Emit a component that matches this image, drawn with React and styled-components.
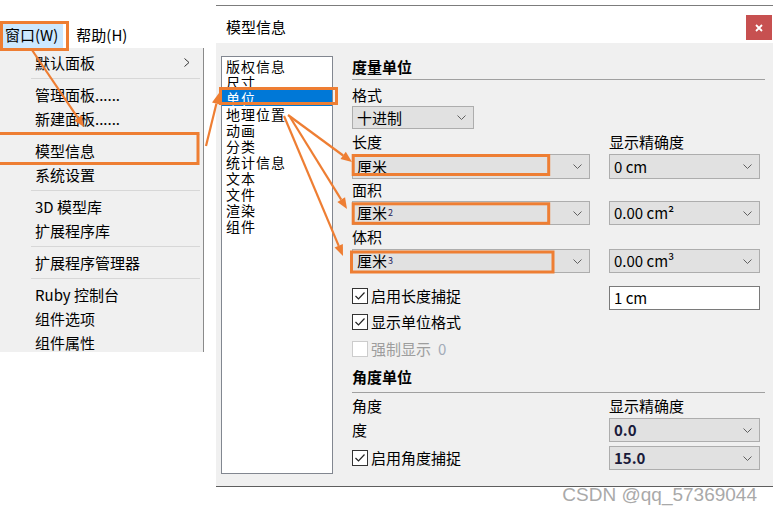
import React from "react";
import styled, { createGlobalStyle } from "styled-components";

const ORANGE = "#ee7e33";

const GlobalStyle = createGlobalStyle`
  html, body {
    margin: 0;
    padding: 0;
    background: #fff;
  }
  body {
    font-family: "Noto Sans CJK SC", "Noto Sans", sans-serif;
    color: #000;
  }
`;

const menuGroups = [
  [{ label: "默认面板", sub: true }],
  [{ label: "管理面板......" }, { label: "新建面板......" }],
  [{ label: "模型信息" }, { label: "系统设置" }],
  [{ label: "3D 模型库" }, { label: "扩展程序库" }],
  [{ label: "扩展程序管理器" }],
  [{ label: "Ruby 控制台" }, { label: "组件选项" }, { label: "组件属性" }],
];

const navItems = ["版权信息", "尺寸", "单位", "地理位置", "动画", "分类", "统计信息", "文本", "文件", "渲染", "组件"];

function Chevron() {
  return (
    <svg width="9" height="5" viewBox="0 0 9 5">
      <polyline points="0.5,0.5 4.5,4.5 8.5,0.5" fill="none" stroke="#606060" strokeWidth="1" />
    </svg>
  );
}

function Check({ checked, disabled, children }) {
  return (
    <CheckRow $disabled={disabled}>
      <Box $disabled={disabled}>
        {checked && (
          <svg width="12" height="10" viewBox="0 0 12 10">
            <polyline points="1.5,5 4.5,8 10.5,1.5" fill="none" stroke="#222" strokeWidth="1.2" />
          </svg>
        )}
      </Box>
      {children}
    </CheckRow>
  );
}

function Arrow({ x1, y1, x2, y2 }) {
  const a = Math.atan2(y2 - y1, x2 - x1);
  const len = 11;
  const half = 4.5;
  const bx = x2 - len * Math.cos(a);
  const by = y2 - len * Math.sin(a);
  const p1 = `${bx + half * Math.sin(a)},${by - half * Math.cos(a)}`;
  const p2 = `${bx - half * Math.sin(a)},${by + half * Math.cos(a)}`;
  return (
    <g>
      <line x1={x1} y1={y1} x2={bx} y2={by} stroke={ORANGE} strokeWidth="2.2" />
      <polygon points={`${x2},${y2} ${p1} ${p2}`} fill={ORANGE} />
    </g>
  );
}

export default function App() {
  return (
    <Page>
      <GlobalStyle />
      <MenuColumn>
        <MenuBar>
          <MenuTitle $active>窗口(W)</MenuTitle>
          <MenuTitle>帮助(H)</MenuTitle>
        </MenuBar>
        <Dropdown>
          {menuGroups.map((group, gi) => (
            <React.Fragment key={gi}>
              {gi > 0 && <MenuSeparator />}
              {group.map((item) => (
                <MenuItem key={item.label}>
                  {item.label}
                  {item.sub && (
                    <SubArrow width="6" height="9" viewBox="0 0 6 9">
                      <polyline points="0.5,0.5 5,4.5 0.5,8.5" fill="none" stroke="#333" strokeWidth="1" />
                    </SubArrow>
                  )}
                </MenuItem>
              ))}
            </React.Fragment>
          ))}
        </Dropdown>
      </MenuColumn>

      <DialogColumn>
        <Dialog>
          <TitleBar>
            <TitleText>模型信息</TitleText>
            <CloseButton>
              <svg width="8" height="8" viewBox="0 0 8 8">
                <path d="M1 1 L7 7 M7 1 L1 7" stroke="#fff" strokeWidth="1.8" />
              </svg>
            </CloseButton>
          </TitleBar>
          <DialogBody>
            <NavList>
              {navItems.map((n) => (
                <NavItem key={n} $selected={n === "单位"}>{n}</NavItem>
              ))}
            </NavList>

            <Panel>
              <SectionHead $h={24} $mb={4}>度量单位</SectionHead>
              <Row $h={22}><span>格式</span></Row>
              <Row $h={23}>
                <Select $w={122}>十进制<Chevron /></Select>
              </Row>
              <Row $h={25}><span>长度</span><span>显示精确度</span></Row>
              <Row $h={25}>
                <Select>厘米<Chevron /></Select>
                <Select>0 cm<Chevron /></Select>
              </Row>
              <Row $h={22}><span>面积</span></Row>
              <Row $h={24}>
                <Select><span>厘米<Sup>2</Sup></span><Chevron /></Select>
                <Select>0.00 cm²<Chevron /></Select>
              </Row>
              <Row $h={24}><span>体积</span></Row>
              <Row $h={24}>
                <Select><span>厘米<Sup>3</Sup></span><Chevron /></Select>
                <Select>0.00 cm³<Chevron /></Select>
              </Row>

              <Row $h={28} $mt={9}>
                <Check checked>启用长度捕捉</Check>
                <TextInput>1 cm</TextInput>
              </Row>
              <Row $h={24}>
                <Check checked>显示单位格式</Check>
              </Row>
              <Row $h={30}>
                <Check disabled>强制显示 <Zero>0</Zero></Check>
              </Row>

              <SectionHead $h={29} $pb={3}>角度单位</SectionHead>
              <Row $h={25}><span>角度</span><span>显示精确度</span></Row>
              <Row $h={24}>
                <span>度</span>
                <Select $bold>0.0<Chevron /></Select>
              </Row>
              <Row $h={24} $mt={4}>
                <Check checked>启用角度捕捉</Check>
                <Select $bold>15.0<Chevron /></Select>
              </Row>
            </Panel>
          </DialogBody>
        </Dialog>
        <Watermark>CSDN @qq_57369044</Watermark>
      </DialogColumn>

      <Annotations width="773" height="515" viewBox="0 0 773 515">
        <g fill="none" stroke={ORANGE} strokeWidth="3">
          <rect x="1.5" y="22.5" width="66" height="27" />
          <rect x="-2" y="133.5" width="200" height="30" />
          <rect x="220.5" y="88.5" width="116" height="15" />
          <rect x="353.2" y="155.5" width="195.5" height="19" />
          <rect x="353.2" y="203.8" width="195.5" height="19.5" />
          <rect x="351.5" y="252" width="201.5" height="20" />
        </g>
        <Arrow x1={32} y1={50} x2={84} y2={127} />
        <Arrow x1={206} y1={146} x2={219} y2={93} />
        <Arrow x1={288} y1={115} x2={352} y2={162} />
        <Arrow x1={290} y1={117} x2={347} y2={209} />
        <Arrow x1={284} y1={116} x2={343} y2={256} />
      </Annotations>
    </Page>
  );
}

const Page = styled.div`
  position: relative;
  width: 773px;
  height: 515px;
  overflow: hidden;
  display: flex;
  align-items: flex-start;
  background: #fff;
`;

const MenuColumn = styled.div`
  width: 204px;
  flex-shrink: 0;
  padding-top: 22px;
`;

const MenuBar = styled.div`
  display: flex;
  gap: 8px;
  height: 26px;
`;

const MenuTitle = styled.div`
  padding: 0 5px;
  height: 26px;
  line-height: 26px;
  font-size: 15px;
  background: ${(p) => (p.$active ? "#cce8ff" : "transparent")};
`;

const Dropdown = styled.div`
  height: 304px;
  overflow: hidden;
  box-sizing: border-box;
  padding-top: 2px;
  background: #f0f0f0;
  border-right: 1px solid #8a8a8a;
`;

const MenuItem = styled.div`
  display: flex;
  align-items: center;
  height: 24px;
  padding: 0 13px 0 35px;
  font-size: 15px;
  white-space: nowrap;
`;

const SubArrow = styled.svg`
  margin-left: auto;
`;

const MenuSeparator = styled.div`
  height: 1px;
  background: #d7d7d7;
  margin: 4px 3px 3px 31px;
`;

const DialogColumn = styled.div`
  flex: 1;
  margin-left: 12px;
  padding-top: 5px;
  display: flex;
  flex-direction: column;
`;

const Dialog = styled.div`
  border-top: 1px solid #7c7c7c;
  border-bottom: 1px solid #5e5e5e;
  background: #f0f0f0;
`;

const TitleBar = styled.div`
  height: 37px;
  background: #fff;
  display: flex;
  justify-content: space-between;
  align-items: flex-start;
`;

const TitleText = styled.div`
  padding: 11px 0 0 10px;
  line-height: 20px;
  font-size: 15px;
`;

const CloseButton = styled.div`
  margin: 9px 1px 0 0;
  width: 26px;
  height: 25px;
  background: #c75050;
  display: flex;
  align-items: center;
  justify-content: center;
`;

const DialogBody = styled.div`
  height: 443px;
  box-sizing: border-box;
  display: flex;
  padding: 13px 8px 0 5px;
`;

const NavList = styled.div`
  width: 112px;
  height: 418px;
  flex-shrink: 0;
  box-sizing: border-box;
  border: 1px solid #828790;
  background: #fff;
  padding: 1px 0;
`;

const NavItem = styled.div`
  height: 16px;
  line-height: 16px;
  font-size: 14px;
  letter-spacing: 1px;
  padding-left: 4px;
  background: ${(p) => (p.$selected ? "#0078d7" : "transparent")};
  color: ${(p) => (p.$selected ? "#fff" : "#000")};
`;

const Panel = styled.div`
  flex: 1;
  margin-left: 19px;
  display: flex;
  flex-direction: column;
`;

const SectionHead = styled.div`
  height: ${(p) => p.$h}px;
  box-sizing: border-box;
  display: flex;
  align-items: center;
  padding-bottom: ${(p) => p.$pb || 2}px;
  margin-bottom: ${(p) => p.$mb || 0}px;
  font-size: 15px;
  font-weight: bold;
  border-bottom: 1px solid #a0a0a0;
`;

const Row = styled.div`
  display: grid;
  grid-template-columns: 238px 151px;
  column-gap: 19px;
  align-items: center;
  height: ${(p) => p.$h}px;
  margin-top: ${(p) => p.$mt || 0}px;
  font-size: 15px;
  line-height: 20px;
`;

const Select = styled.div`
  height: 100%;
  width: ${(p) => (p.$w ? `${p.$w}px` : "auto")};
  box-sizing: border-box;
  display: flex;
  align-items: center;
  justify-content: space-between;
  padding: 0 7px 0 4px;
  border: 1px solid #adadad;
  background: #e1e1e1;
  font-size: 15px;
  font-weight: ${(p) => (p.$bold ? 700 : 400)};
  color: ${(p) => (p.$bold ? "#1a1a3a" : "#000")};
`;

const Sup = styled.span`
  font-size: 9px;
  vertical-align: 3px;
  margin-left: 1px;
  color: #1c1c5a;
`;

const TextInput = styled.div`
  align-self: end;
  height: 24px;
  box-sizing: border-box;
  display: flex;
  align-items: center;
  padding-left: 4px;
  border: 1px solid #7a7a7a;
  background: #fff;
  font-size: 15px;
`;

const CheckRow = styled.div`
  display: flex;
  align-items: center;
  gap: 3px;
  color: ${(p) => (p.$disabled ? "#9d9d9d" : "#000")};
`;

const Box = styled.span`
  width: 16px;
  height: 16px;
  box-sizing: border-box;
  border: 1px solid ${(p) => (p.$disabled ? "#cccccc" : "#333")};
  background: #fff;
  display: flex;
  align-items: center;
  justify-content: center;
`;

const Zero = styled.span`
  color: #a3abb8;
  margin-left: 4px;
`;

const Watermark = styled.div`
  align-self: flex-end;
  margin-right: 16px;
  font-family: "Liberation Sans", Arial, sans-serif;
  font-size: 19px;
  line-height: 16px;
  color: #a9a9a9;
`;

const Annotations = styled.svg`
  position: absolute;
  left: 0;
  top: 0;
  pointer-events: none;
`;
